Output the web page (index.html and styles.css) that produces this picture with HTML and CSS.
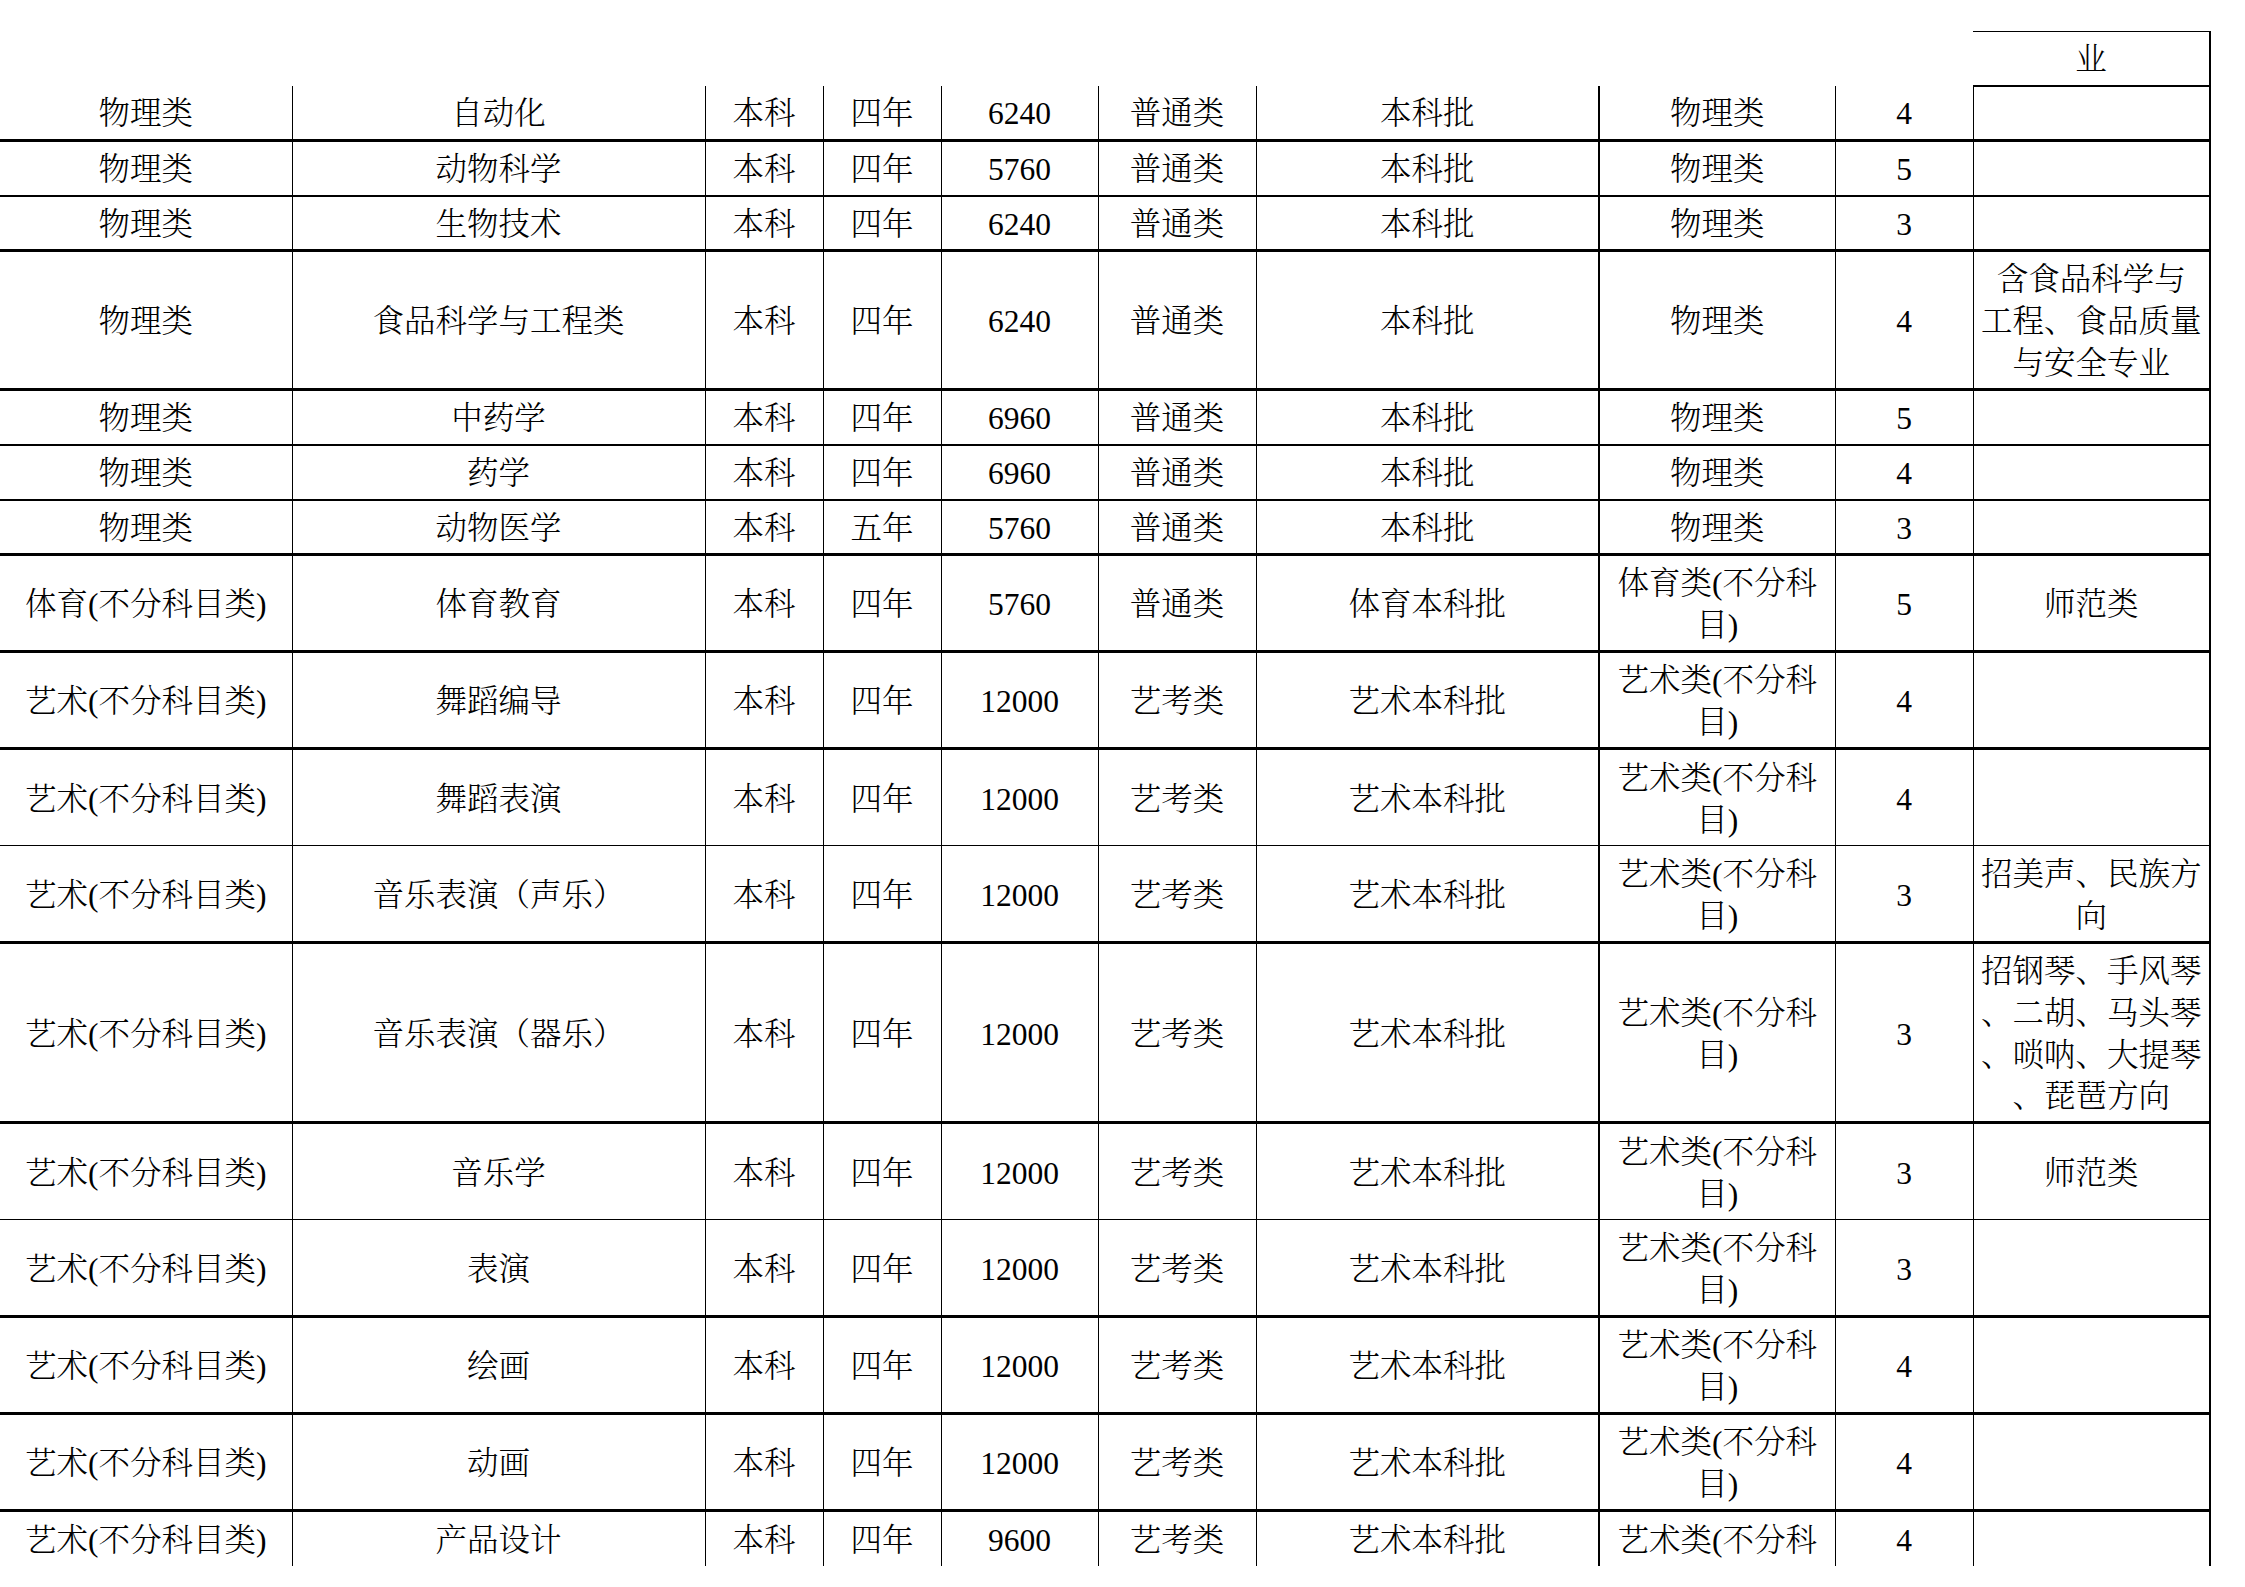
FILE: index.html
```html
<!DOCTYPE html>
<html lang="zh-CN">
<head>
<meta charset="utf-8">
<title>招生专业表</title>
<link rel="stylesheet" href="styles.css">
</head>
<body>
<table class="grid">
  <colgroup>
    <col class="c1"><col class="c2"><col class="c3"><col class="c4"><col class="c5">
    <col class="c6"><col class="c7"><col class="c8"><col class="c9"><col class="c10">
  </colgroup>
  <tbody>
    <tr class="head"><td></td><td></td><td></td><td></td><td></td><td></td><td></td><td></td><td></td><td class="head-last">业</td></tr>
    <tr class="h1 b3"><td>物理类</td><td>自动化</td><td>本科</td><td>四年</td><td>6240</td><td>普通类</td><td>本科批</td><td>物理类</td><td>4</td><td></td></tr>
    <tr class="h1 b2"><td>物理类</td><td>动物科学</td><td>本科</td><td>四年</td><td>5760</td><td>普通类</td><td>本科批</td><td>物理类</td><td>5</td><td></td></tr>
    <tr class="h1 b3"><td>物理类</td><td>生物技术</td><td>本科</td><td>四年</td><td>6240</td><td>普通类</td><td>本科批</td><td>物理类</td><td>3</td><td></td></tr>
    <tr class="h3 b3"><td>物理类</td><td>食品科学与工程类</td><td>本科</td><td>四年</td><td>6240</td><td>普通类</td><td>本科批</td><td>物理类</td><td>4</td><td>含食品科学与<br>工程、食品质量<br>与安全专业</td></tr>
    <tr class="h1 b2"><td>物理类</td><td>中药学</td><td>本科</td><td>四年</td><td>6960</td><td>普通类</td><td>本科批</td><td>物理类</td><td>5</td><td></td></tr>
    <tr class="h1 b2"><td>物理类</td><td>药学</td><td>本科</td><td>四年</td><td>6960</td><td>普通类</td><td>本科批</td><td>物理类</td><td>4</td><td></td></tr>
    <tr class="h1 b3"><td>物理类</td><td>动物医学</td><td>本科</td><td>五年</td><td>5760</td><td>普通类</td><td>本科批</td><td>物理类</td><td>3</td><td></td></tr>
    <tr class="h2 b3"><td>体育(不分科目类)</td><td>体育教育</td><td>本科</td><td>四年</td><td>5760</td><td>普通类</td><td>体育本科批</td><td>体育类(不分科<br>目)</td><td>5</td><td>师范类</td></tr>
    <tr class="h2 b3"><td>艺术(不分科目类)</td><td>舞蹈编导</td><td>本科</td><td>四年</td><td>12000</td><td>艺考类</td><td>艺术本科批</td><td>艺术类(不分科<br>目)</td><td>4</td><td></td></tr>
    <tr class="h2 b1"><td>艺术(不分科目类)</td><td>舞蹈表演</td><td>本科</td><td>四年</td><td>12000</td><td>艺考类</td><td>艺术本科批</td><td>艺术类(不分科<br>目)</td><td>4</td><td></td></tr>
    <tr class="h2 b3"><td>艺术(不分科目类)</td><td>音乐表演（声乐）</td><td>本科</td><td>四年</td><td>12000</td><td>艺考类</td><td>艺术本科批</td><td>艺术类(不分科<br>目)</td><td>3</td><td>招美声、民族方<br>向</td></tr>
    <tr class="h4 b3"><td>艺术(不分科目类)</td><td>音乐表演（器乐）</td><td>本科</td><td>四年</td><td>12000</td><td>艺考类</td><td>艺术本科批</td><td>艺术类(不分科<br>目)</td><td>3</td><td>招钢琴、手风琴<br>、二胡、马头琴<br>、唢呐、大提琴<br>、琵琶方向</td></tr>
    <tr class="h2 b1"><td>艺术(不分科目类)</td><td>音乐学</td><td>本科</td><td>四年</td><td>12000</td><td>艺考类</td><td>艺术本科批</td><td>艺术类(不分科<br>目)</td><td>3</td><td>师范类</td></tr>
    <tr class="h2 b3"><td>艺术(不分科目类)</td><td>表演</td><td>本科</td><td>四年</td><td>12000</td><td>艺考类</td><td>艺术本科批</td><td>艺术类(不分科<br>目)</td><td>3</td><td></td></tr>
    <tr class="h2 b3"><td>艺术(不分科目类)</td><td>绘画</td><td>本科</td><td>四年</td><td>12000</td><td>艺考类</td><td>艺术本科批</td><td>艺术类(不分科<br>目)</td><td>4</td><td></td></tr>
    <tr class="h2 b3"><td>艺术(不分科目类)</td><td>动画</td><td>本科</td><td>四年</td><td>12000</td><td>艺考类</td><td>艺术本科批</td><td>艺术类(不分科<br>目)</td><td>4</td><td></td></tr>
    <tr class="h1 last"><td>艺术(不分科目类)</td><td>产品设计</td><td>本科</td><td>四年</td><td>9600</td><td>艺考类</td><td>艺术本科批</td><td>艺术类(不分科</td><td>4</td><td></td></tr>
  </tbody>
</table>
</body>
</html>
```

FILE: styles.css
```css
html, body {
  margin: 0;
  padding: 0;
  background: #ffffff;
}

body {
  width: 2245px;
  height: 1587px;
  overflow: hidden;
  color: #000000;
  font-family: "Liberation Serif", "Noto Serif CJK SC", "Noto Sans CJK SC", serif;
  font-size: 31.5px;
  font-weight: 300;
}

.grid {
  margin-top: 31px;
  border-collapse: collapse;
  table-layout: fixed;
  width: 2210px;
}

.c1 { width: 292px; }
.c2 { width: 413px; }
.c3 { width: 118px; }
.c4 { width: 118px; }
.c5 { width: 157px; }
.c6 { width: 158px; }
.c7 { width: 343px; }
.c8 { width: 236px; }
.c9 { width: 138px; }
.c10 { width: 237px; }

.grid td {
  padding: 4px 4px 0;
  text-align: center;
  vertical-align: middle;
  line-height: 41.7px;
  white-space: nowrap;
  border-right: 1px solid #000;
}

.grid td:nth-child(7),
.grid td:nth-child(10) {
  border-right-width: 2px;
}

.grid td:first-child {
  border-left: none;
}

.paren { letter-spacing: 0; }

/* header remnant */
.head { height: 54px; }
.head td { border: none; }
.head td.head-last {
  border-top: 1px solid #000;
  border-right: 2px solid #000;
  border-bottom: 2px solid #000;
}

/* row heights */
.h1 { height: 55px; }
.h2 { height: 97px; }
.h3 { height: 139px; }
.h4 { height: 180px; }

/* bottom rule weights */
.b1 td { border-bottom: 1px solid #000; }
.b2 td { border-bottom: 2px solid #000; }
.b3 td { border-bottom: 3px solid #000; }
.last td { border-bottom: none; }
```
